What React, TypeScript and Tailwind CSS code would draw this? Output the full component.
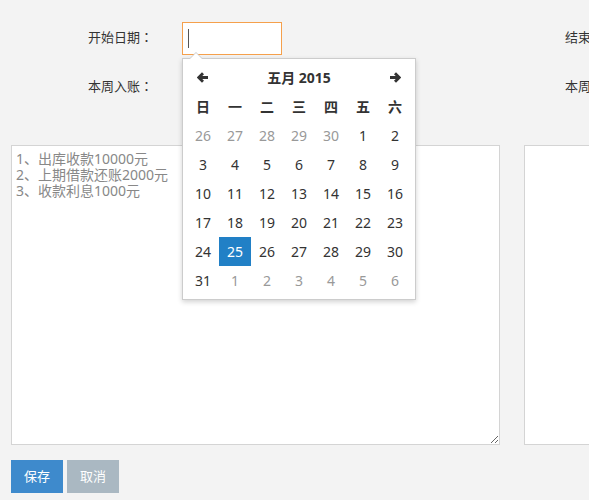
import React from 'react';

const weekDays = ['日', '一', '二', '三', '四', '五', '六'];

// May 2015 grid, muted = days outside the month
const days: { d: number; muted?: boolean }[] = [
  ...[26, 27, 28, 29, 30].map((d) => ({ d, muted: true })),
  ...Array.from({ length: 31 }, (_, i) => ({ d: i + 1 })),
  ...[1, 2, 3, 4, 5, 6].map((d) => ({ d, muted: true })),
];

const Colon: React.FC = () => (
  <span style={{ fontFamily: '"Noto Sans CJK JP", sans-serif' }}>：</span>
);

const Label: React.FC<{ text: string }> = ({ text }) => (
  <span className="w-[94px] shrink-0 -mt-[2px]">
    {text}
    <Colon />
  </span>
);

const Arrow: React.FC<{ flip?: boolean }> = ({ flip }) => (
  <svg width="12" height="11" viewBox="0 0 12 11" className={flip ? 'rotate-180' : ''}>
    <path d="M1.5 5.5 H11 M6 1.2 L1.8 5.5 L6 9.8" fill="none" stroke="#333333" strokeWidth="2.8" strokeLinejoin="miter" />
  </svg>
);

const Calendar: React.FC = () => {
  return (
    <div className="absolute left-0 top-[36px] z-10 w-[234px] bg-white border border-[#cccccc] shadow-[0_2px_5px_rgba(0,0,0,0.18)] px-[4px] py-[4px]">
      {/* arrow tip */}
      <div className="absolute -top-[7px] left-[6px] w-0 h-0 border-x-[7px] border-x-transparent border-b-[7px] border-b-[#cccccc]"></div>
      <div className="absolute -top-[6px] left-[7px] w-0 h-0 border-x-[6px] border-x-transparent border-b-[6px] border-b-white"></div>

      <div className="grid grid-cols-7 text-[14px] text-[#333333]">
        <div className="h-[29px] flex items-center justify-center">
          <Arrow />
        </div>
        <div className="col-span-5 h-[29px] flex items-center justify-center font-bold">五月 2015</div>
        <div className="h-[29px] flex items-center justify-center">
          <Arrow flip />
        </div>

        {weekDays.map((w) => (
          <div key={w} className="h-[29px] flex items-center justify-center font-bold">
            {w}
          </div>
        ))}

        {days.map((x, i) => (
          <div
            key={i}
            className={
              x.d === 25 && !x.muted
                ? 'h-[29px] flex items-center justify-center bg-[#2180c6] text-white'
                : x.muted
                ? 'h-[29px] flex items-center justify-center text-[#999999]'
                : 'h-[29px] flex items-center justify-center'
            }
          >
            {x.d}
          </div>
        ))}
      </div>
    </div>
  );
};

const App: React.FC = () => {
  return (
    <div
      className="min-h-screen w-full overflow-hidden bg-[#f3f3f3] text-[13px] text-[#333333]"
      style={{ fontFamily: '"Noto Sans", "Noto Sans CJK SC", sans-serif' }}
    >
      {/* Form rows */}
      <div className="flex pt-[22px] w-[1100px]">
        <div className="w-[477px] shrink-0 flex flex-col gap-[16px]">
          <div className="flex items-center h-[33px]">
            <div className="w-[88px] shrink-0"></div>
            <Label text="开始日期" />
            <div className="relative">
              <div className="w-[100px] h-[33px] bg-white border border-[#f5a04c] flex items-center pl-[5px]">
                <span className="w-px h-[19px] bg-[#555555]"></span>
              </div>
              <Calendar />
            </div>
          </div>
          <div className="flex items-center h-[33px]">
            <div className="w-[88px] shrink-0"></div>
            <Label text="本周入账" />
            <div className="w-[100px] h-[33px] bg-white border border-[#cccccc]"></div>
          </div>
        </div>
        <div className="w-[477px] shrink-0 flex flex-col gap-[16px]">
          <div className="flex items-center h-[33px]">
            <div className="w-[88px] shrink-0"></div>
            <Label text="结束日期" />
            <div className="w-[100px] h-[33px] bg-white border border-[#cccccc]"></div>
          </div>
          <div className="flex items-center h-[33px]">
            <div className="w-[88px] shrink-0"></div>
            <Label text="本周出账" />
            <div className="w-[100px] h-[33px] bg-white border border-[#cccccc]"></div>
          </div>
        </div>
      </div>

      {/* Notes */}
      <div className="flex gap-[24px] pl-[11px] mt-[41px] w-[1100px]">
        <textarea
          className="w-[489px] h-[300px] shrink-0 bg-white border border-[#d4d4d4] px-[4px] py-[5px] text-[14px] leading-[16px] text-[#888888] outline-none"
          style={{ fontFamily: '"Noto Sans", "Noto Sans CJK SC", sans-serif' }}
          defaultValue={'1、出库收款10000元\n2、上期借款还账2000元\n3、收款利息1000元'}
        />
        <textarea className="w-[489px] h-[300px] shrink-0 bg-white border border-[#d4d4d4] outline-none" />
      </div>

      {/* Actions */}
      <div className="flex gap-[4px] pl-[11px] mt-[15px]">
        <button className="w-[52px] h-[33px] bg-[#3e8acc] text-white text-[13px]">保存</button>
        <button className="w-[52px] h-[33px] bg-[#aab8c2] text-white text-[13px]">取消</button>
      </div>
    </div>
  );
};

export default App;
